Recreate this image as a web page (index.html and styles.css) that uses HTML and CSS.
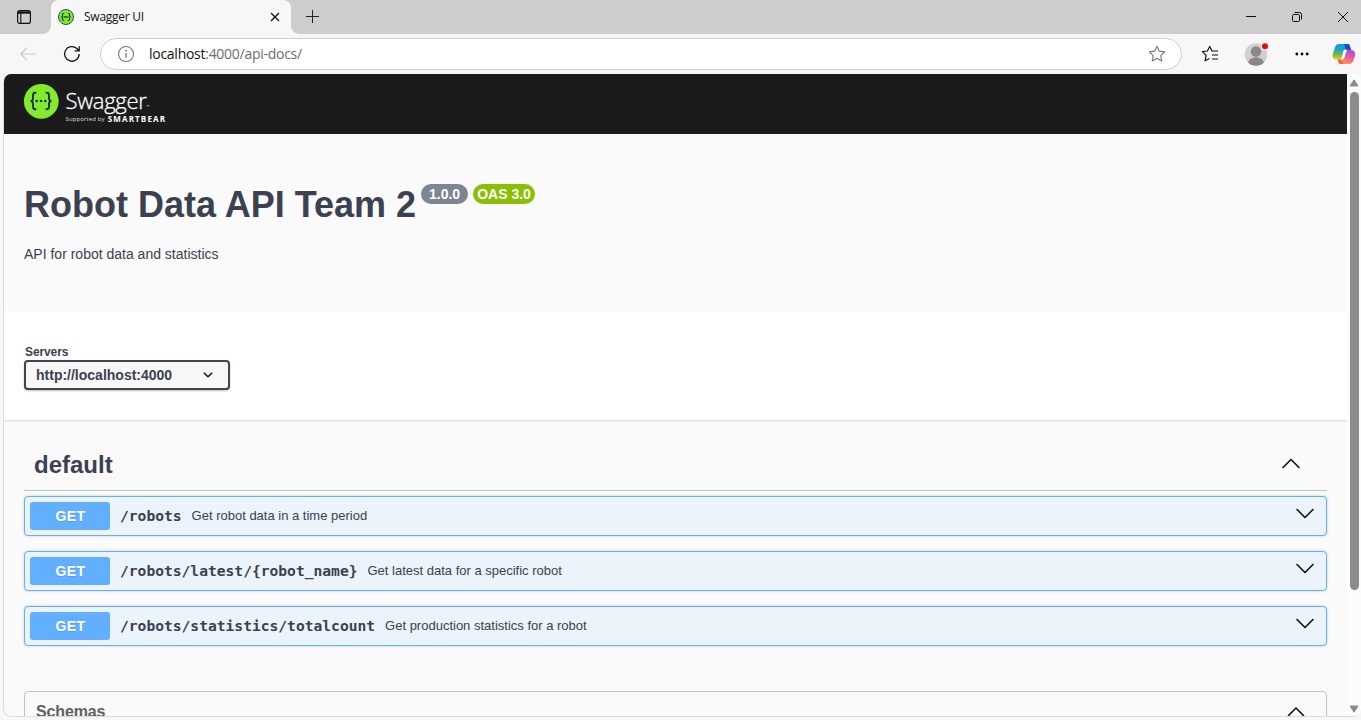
FILE: index.html
```html
<!DOCTYPE html>
<html lang="en">
<head>
<meta charset="utf-8">
<title>Swagger UI</title>
<link rel="stylesheet" href="styles.css">
</head>
<body>
<div class="browser">
  <div class="tabstrip">
    <div class="tab-actions">
      <svg width="16" height="16" viewBox="0 0 16 16" fill="none" stroke="#111"><rect x="1.6" y="1.6" width="12.8" height="12.8" rx="2.2" stroke-width="1.2"/><path d="M2 3.4h12M4.8 4v10" stroke-width="1.1"/><path d="M2 2.5h12v2.2H2z" fill="#111" stroke="none"/></svg>
    </div>
    <div class="tab">
      <svg width="16" height="16" viewBox="0 0 32 32"><circle cx="16" cy="16" r="15" fill="#85ea2d" stroke="#24515a" stroke-width="2"/><path d="M12.5 8.500c-2.500 0-3.500 1-3.500 3v2c0 1.500-.7 2.500-2.500 2.500 1.800 0 2.500 1 2.500 2.500v2c0 2 1 3 3.500 3M19.500 8.500c2.500 0 3.500 1 3.500 3v2c0 1.500.7 2.500 2.500 2.500-1.800 0-2.500 1-2.500 2.500v2c0 2-1 3-3.500 3" fill="none" stroke="#173647" stroke-width="2.300"/><path d="M11 16h10" stroke="#173647" stroke-width="2.500"/></svg>
      <span class="tab-title">Swagger UI</span>
      <svg class="tab-close" width="10" height="10" viewBox="0 0 10 10"><path d="M1 1l8 8M9 1l-8 8" stroke="#111" stroke-width="1.300"/></svg>
    </div>
    <svg class="new-tab" width="13" height="13" viewBox="0 0 13 13"><path d="M6.500 0v13M0 6.500h13" stroke="#222"/></svg>
    <div class="window-controls">
      <svg width="10" height="10" viewBox="0 0 10 10"><path d="M0 4.500h10" stroke="#111"/></svg>
      <svg width="10" height="10" viewBox="0 0 10 10" fill="none" stroke="#111"><rect x=".5" y="2.500" width="7" height="7" rx="1.200"/><path d="M2.500.5h5a2 2 0 0 1 2 2v5"/></svg>
      <svg width="10" height="10" viewBox="0 0 10 10"><path d="M0 0l10 10M10 0L0 10" stroke="#111"/></svg>
    </div>
  </div>
  <div class="toolbar">
    <svg class="back" width="16" height="14" viewBox="0 0 16 14" fill="none" stroke="#c9c9c9" stroke-width="1.200"><path d="M16 7H.8M7 .6L.8 7 7 13.400"/></svg>
    <svg class="reload" width="18" height="18" viewBox="0 0 18 18" fill="none" stroke="#111" stroke-width="1.300"><path d="M16.200 9A7.300 7.300 0 1 1 13.800 3.500L16 5.600M16.200 1.200v4.600h-4.600"/></svg>
    <div class="address">
      <svg width="18" height="18" viewBox="0 0 18 18"><circle cx="9" cy="9" r="7.500" fill="none" stroke="#767676" stroke-width="1.100"/><path d="M9 8v4.700" stroke="#767676" stroke-width="1.300"/><circle cx="9" cy="5.700" r=".9" fill="#767676"/></svg>
      <span class="url"><span class="url-host">localhost</span>:4000/api-docs/</span>
      <svg class="star" width="18" height="18" viewBox="0 0 18 18" fill="none" stroke="#767676" stroke-width="1.100" stroke-linejoin="round"><path d="M9 1.300l2.350 4.850 5.300.75-3.850 3.700.95 5.300L9 13.350 4.250 15.900l.95-5.300L1.350 6.900l5.300-.75z"/></svg>
    </div>
    <svg class="favorites" width="18" height="18" viewBox="0 0 18 18" fill="none" stroke="#111" stroke-width="1.200" stroke-linejoin="round"><path d="M12 6.100l-1-.1L8.700 1.400 6.400 6l-5 .7 3.700 3.700-1 5.400 4.300-2.400M11 6h6M11 10h6M11 14h6"/></svg>
    <svg class="profile" width="26" height="24" viewBox="0 0 26 24"><defs><clipPath id="avatar"><circle cx="12" cy="12.500" r="11.300"/></clipPath></defs><circle cx="12" cy="12.500" r="11.300" fill="#d2d0ce"/><g clip-path="url(#avatar)" fill="#8a8784"><circle cx="12" cy="9.500" r="5.200"/><ellipse cx="12" cy="21.500" rx="8" ry="6.300"/></g><circle cx="21" cy="4.300" r="4" fill="#f7f7f7"/><circle cx="21" cy="4.300" r="3" fill="#e00b0b"/></svg>
    <svg class="more" width="14" height="4" viewBox="0 0 14 4"><circle cx="1.800" cy="2" r="1.400"/><circle cx="7" cy="2" r="1.400"/><circle cx="12.200" cy="2" r="1.400"/></svg>
    <svg class="copilot" width="24" height="22" viewBox="0 0 24 22">
      <defs>
        <linearGradient id="cool" x1="0" y1="0" x2="0" y2="1"><stop offset="0" stop-color="#079ae8"/><stop offset=".35" stop-color="#1ba6cf"/><stop offset=".65" stop-color="#6bb94e"/><stop offset="1" stop-color="#f4cd15"/></linearGradient>
        <linearGradient id="warm" x1=".6" y1="0" x2=".3" y2="1"><stop offset="0" stop-color="#a64fe8"/><stop offset=".5" stop-color="#ee5c9a"/><stop offset="1" stop-color="#ff9c4e"/></linearGradient>
      </defs>
      <path d="M7 1h9c1 0 1.500.7 1.900 2l1 3.700h-3c-2 0-3 1-3.600 3l-2 7H5.500c-5 0-5.500-3-4.500-6.500l2-6C3.700 2 5 1 7 1z" fill="url(#cool)"/>
      <path d="M12.500 1H16c1 0 1.500.7 1.900 2l1.100 4h-5.500z" fill="#1650c7"/>
      <path d="M17 21H8.500c-1 0-1.600-.7-2-2l-.7-2.500h3.400c1.500 0 2-1 2.600-3l2-6.500h4.500c5 0 5.500 3 4.500 6.500l-1.600 4.500c-.8 2-2 3-4.200 3z" fill="url(#warm)"/>
      <path d="M5.700 16.500h3.500l1 2c.5 1.500 1 2.500 2.200 2.500h-4c-1 0-1.600-.7-2-2z" fill="#f26a3a"/>
      <path d="M12 6.800h3.600c-.9.8-1.200 1.600-1.600 3l-1.400 4.500c-.4 1.300-1 2-1.800 2.200H8.200c1-.3 1.400-1.200 1.800-2.500l1-4c.4-1.500.6-2.500 1-3.200z" fill="#fff"/>
    </svg>
  </div>
  <div class="viewport">
    <main class="page">
      <header class="topbar">
        <svg class="logo-mark" width="36" height="36" viewBox="0 0 36 36"><circle cx="18.300" cy="18.300" r="17.400" fill="#85ea2d"/><g fill="none" stroke="#173647" stroke-width="1.900"><path d="M13.300 9.800h-1c-1.700 0-2.300.8-2.300 2.400v3c0 1.700-.6 2.800-2.500 2.800 1.900 0 2.500 1.100 2.500 2.800v3c0 1.600.6 2.400 2.300 2.400h1M22.700 9.800h1c1.700 0 2.300.8 2.300 2.400v3c0 1.700.6 2.800 2.500 2.800-1.900 0-2.500 1.100-2.500 2.800v3c0 1.600-.6 2.400-2.300 2.400h-1"/></g><g fill="#173647"><circle cx="13.700" cy="18" r="1.300"/><circle cx="18" cy="18" r="1.300"/><circle cx="22.300" cy="18" r="1.300"/></g></svg>
        <div class="logo-words">
          <div class="logo-name">Swagger<span class="tm">™</span></div>
          <div class="logo-support"><span class="supported">Supported by</span><span class="smartbear">SMARTBEAR</span></div>
        </div>
      </header>
      <section class="info">
        <div class="title-row"><h2 class="title">Robot Data API Team 2</h2><span class="badge badge-version">1.0.0</span><span class="badge badge-oas">OAS 3.0</span></div>
        <p class="description">API for robot data and statistics</p>
      </section>
      <section class="servers">
        <span class="servers-label">Servers</span>
        <div class="select">http://localhost:4000<svg width="10" height="6" viewBox="0 0 10 6" fill="none" stroke="#111" stroke-width="1.500"><path d="M.8.8L5 4.800 9.200.8"/></svg></div>
      </section>
      <section class="operations">
        <div class="tag"><h3 class="tag-name">default</h3><svg class="chevron" width="20" height="12" viewBox="0 0 20 12"><path d="M2 9.500L10 1.500l8 8"/></svg></div>
        <div class="op"><span class="method">GET</span><span class="path">/robots</span><span class="summary">Get robot data in a time period</span><svg class="chevron" width="20" height="12" viewBox="0 0 20 12"><path d="M2 1.500L10 9.500l8-8"/></svg></div>
        <div class="op"><span class="method">GET</span><span class="path">/robots/latest/{robot_name}</span><span class="summary">Get latest data for a specific robot</span><svg class="chevron" width="20" height="12" viewBox="0 0 20 12"><path d="M2 1.500L10 9.500l8-8"/></svg></div>
        <div class="op"><span class="method">GET</span><span class="path">/robots/statistics/totalcount</span><span class="summary">Get production statistics for a robot</span><svg class="chevron" width="20" height="12" viewBox="0 0 20 12"><path d="M2 1.500L10 9.500l8-8"/></svg></div>
      </section>
      <section class="models"><h4 class="models-title">Schemas</h4><svg class="chevron" width="18" height="12" viewBox="0 0 18 12"><path d="M1.500 9.500L9 2l7.500 7.500"/></svg></section>
    </main>
    <div class="scrollbar">
      <svg width="10" height="8" viewBox="0 0 10 8"><path d="M5 .8L9 7H1z" fill="#8b8b8b" stroke="#8b8b8b" stroke-linejoin="round"/></svg>
      <div class="thumb"></div>
      <svg class="scroll-down" width="10" height="8" viewBox="0 0 10 8"><path d="M5 7.200L9 1H1z" fill="#8b8b8b" stroke="#8b8b8b" stroke-linejoin="round"/></svg>
    </div>
  </div>
</div>
</body>
</html>
```

FILE: styles.css
```css
* { box-sizing: border-box; }
body { margin: 0; background: #f7f7f7; font-family: "Liberation Sans", Arial, sans-serif; color: #3b4151; }
svg { display: block; flex: none; }
.browser { height: 720px; display: flex; flex-direction: column; overflow: hidden; }

.tabstrip { height: 34px; flex: none; display: flex; align-items: center; background: #cdcdcd; }
.tab-actions { width: 51px; height: 34px; padding: 9px 0 0 16px; background: #cdcdcd; }
.tab { width: 240px; height: 34px; padding: 0 11px 0 7px; display: flex; align-items: center; background: #f7f7f7; border-radius: 8px 8px 0 0; position: relative; }
.tab::before, .tab::after { content: ""; position: absolute; bottom: 0; width: 8px; height: 8px; }
.tab::before { left: -8px; background: radial-gradient(circle at 0 0, transparent 7.500px, #f7f7f7 8px); }
.tab::after { right: -8px; background: radial-gradient(circle at 100% 0, transparent 7.500px, #f7f7f7 8px); }
.tab-title { margin-left: 10px; font: 12px/16px "Open Sans", "Noto Sans", sans-serif; letter-spacing: -.25px; color: #111; }
.tab-close { margin-left: auto; }
.new-tab { margin: 0 0 1px 15px; }
.window-controls { margin-left: auto; padding-right: 13px; display: flex; gap: 36px; }

.toolbar { height: 40px; flex: none; display: flex; align-items: center; padding-left: 20px; background: #f7f7f7; }
.reload { margin-left: 27px; }
.address { width: 1082px; height: 32px; margin-left: 19px; padding: 0 15px 0 16px; display: flex; align-items: center; background: #fff; border: 1px solid #cfcfcf; border-radius: 16px; }
.url { margin-left: 14px; font: 14px/20px "Open Sans", "Noto Sans", sans-serif; letter-spacing: -.27px; color: #6d6d6d; }
.url-host { color: #111; }
.star { margin-left: auto; }
.favorites { margin-left: 19px; }
.profile { margin-left: 25px; }
.more { margin-left: 25px; }
.copilot { margin-left: 23px; }

.viewport { height: 643px; flex: none; margin-left: 3px; display: flex; overflow: hidden; border: solid #dcdcdc; border-width: 0 0 1px 1px; border-radius: 8px; background: #fafafa; }
.page { width: 1343px; overflow: hidden; }
.topbar { height: 60px; padding: 9px 0 0 19px; display: flex; background: #1b1b1b; color: #fff; }
.logo-words { margin-left: 6px; padding: 3px 0 0 .5px; }
.logo-name { height: 28px; font: 300 22px/28px "Open Sans", "Noto Sans", sans-serif; letter-spacing: -.3px; -webkit-text-stroke: .3px #fff; display: flex; }
.tm { margin-left: 0; font-size: 4px; line-height: 42px; -webkit-text-stroke: 0; }
.logo-support { display: flex; align-items: center; height: 8px; margin-top: 1px; }
.supported { font: 6px/8px "Open Sans", "Noto Sans", sans-serif; letter-spacing: .12px; color: #ddd; }
.smartbear { margin-left: 3px; font: bold 8px/8px "Open Sans", "Noto Sans", sans-serif; letter-spacing: 1.150px; }

.info { height: 178px; padding: 50px 20px 0; }
.title-row { display: flex; align-items: flex-start; }
.title { margin: 0; font-size: 36px; line-height: 41px; }
.badge { height: 20px; border-radius: 10px; color: #fff; font-weight: bold; font-size: 14px; line-height: 21px; text-align: center; white-space: nowrap; }
.badge-version { width: 47px; margin-left: 5px; background: #7d8492; }
.badge-oas { width: 62px; margin-left: 5px; background: #89bf04; }
.description { margin: 21px 0 0; font-size: 14px; line-height: 16px; }

.servers { height: 108px; padding: 33px 20px 0; background: #fff; box-shadow: 0 1px 2px rgba(0, 0, 0, .15); }
.servers-label { display: block; padding-left: 1px; font-size: 12px; line-height: 14px; font-weight: bold; letter-spacing: -.1px; }
.select { width: 206px; height: 30px; margin-top: 1px; padding: 0 15px 0 10px; display: flex; align-items: center; justify-content: space-between; border: 2px solid #41444e; border-radius: 4px; background: #f7f7f7; box-shadow: 0 1px 2px rgba(0, 0, 0, .25); font-size: 14px; font-weight: bold; }

.operations { padding: 20px 20px 0; }
.tag { height: 51px; padding: 0 26px 0 10px; display: flex; align-items: center; justify-content: space-between; border-bottom: 1px solid rgba(59, 65, 81, .3); margin-bottom: 5px; }
.tag-name { margin: 0; font-size: 24px; line-height: 28px; }
.tag .chevron { margin-bottom: 2px; }
.chevron { fill: none; stroke: #111; stroke-width: 1.600; stroke-linecap: round; stroke-linejoin: round; }
.op { height: 40px; margin-bottom: 15px; padding: 0 11px 0 5px; display: flex; align-items: center; border: 1px solid #61affe; border-radius: 4px; background: #ebf3fb; box-shadow: 0 0 3px rgba(0, 0, 0, .19); }
.method { width: 80px; height: 28px; padding-left: 1px; border-radius: 3px; background: #61affe; color: #fff; font-size: 14px; line-height: 28px; font-weight: bold; letter-spacing: .4px; text-align: center; text-shadow: 0 1px 0 rgba(0, 0, 0, .1); }
.path { margin: 0 0 0 10px; font: bold 14.610px/18px "DejaVu Sans Mono", monospace; }
.summary { margin-left: 10px; font-size: 13px; line-height: 16px; }
.op .chevron { margin: 0 0 5px auto; }

.models { height: 52px; margin: 45px 20px 0; padding: 10px 21px 0 11px; display: flex; align-items: flex-start; justify-content: space-between; border: 1px solid rgba(59, 65, 81, .3); border-radius: 4px; }
.models-title { margin: 0; font-size: 16px; line-height: 19px; letter-spacing: -.15px; color: #606060; }
.models .chevron { margin-top: 4px; }

.scrollbar { width: 14px; display: flex; flex-direction: column; align-items: center; padding: 5px 0 3px; background: #fcfcfc; }
.thumb { width: 9px; height: 498px; margin-top: 5px; border-radius: 5px; background: #8b8b8b; }
.scroll-down { margin-top: auto; }
```
